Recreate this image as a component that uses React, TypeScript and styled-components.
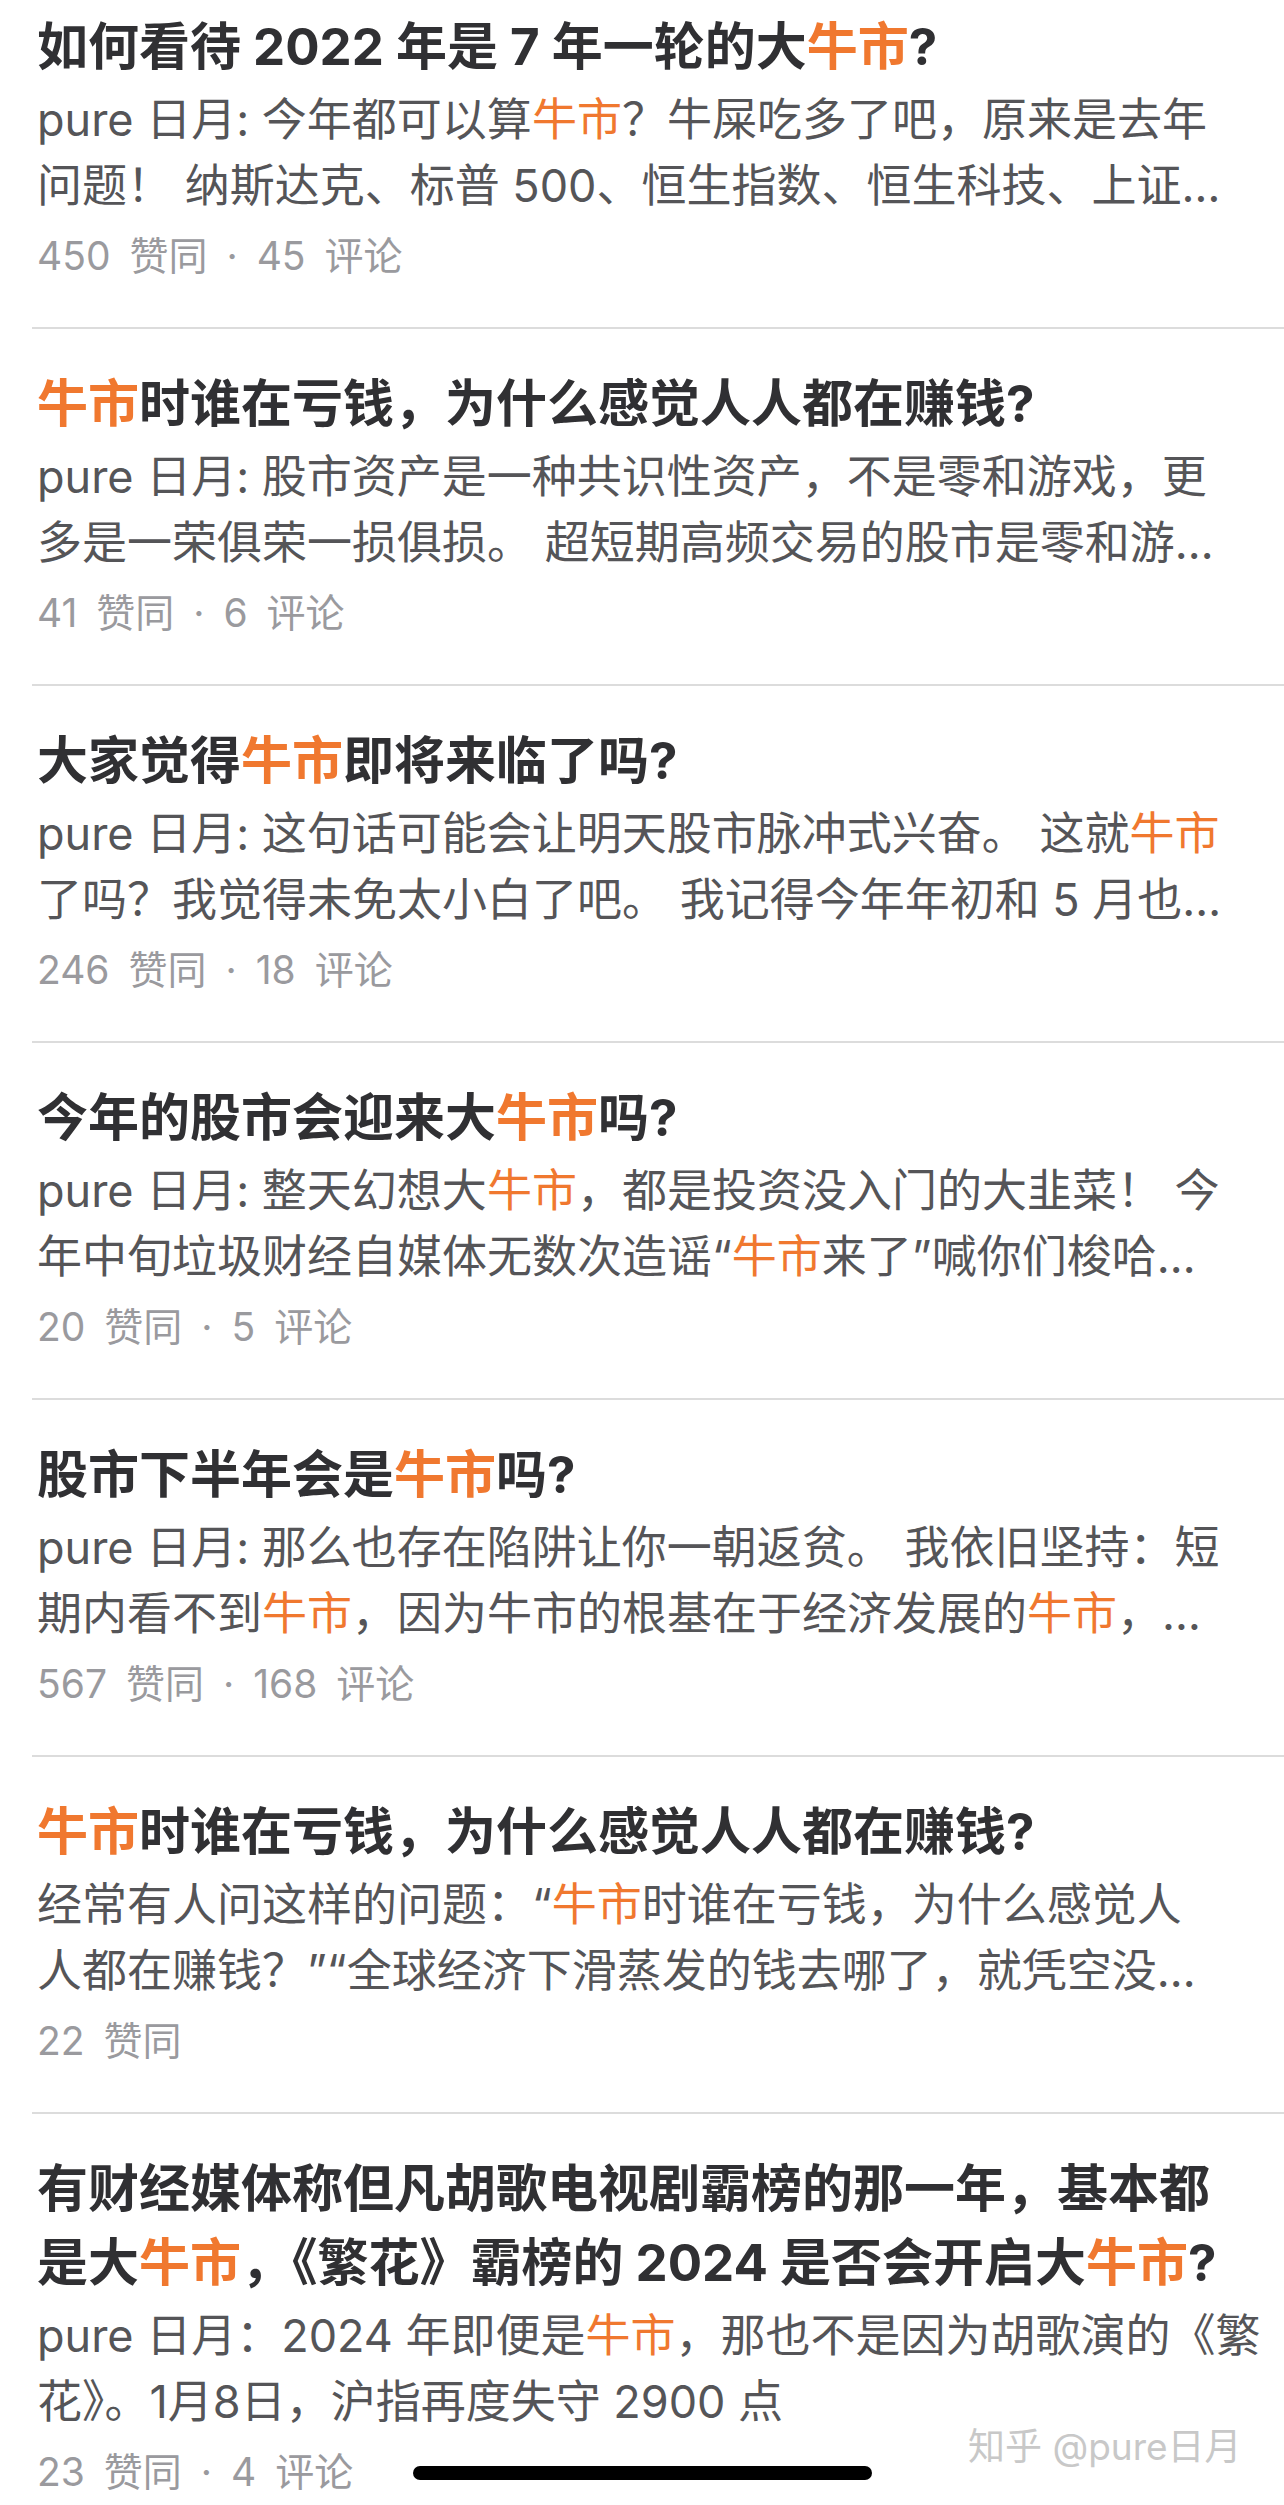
import React from "react";
import styled, { createGlobalStyle } from "styled-components";

type Answer = {
  title: string[];
  excerpt: string[];
  likes: number;
  comments?: number;
};

// {牛市} marks the highlighted keyword
const answers: Answer[] = [
  {
    title: ["如何看待 2022 年是 7 年一轮的大{牛市}?"],
    excerpt: [
      "pure 日月: 今年都可以算{牛市}？牛屎吃多了吧，原来是去年",
      "问题！ 纳斯达克、标普 500、恒生指数、恒生科技、上证…",
    ],
    likes: 450,
    comments: 45,
  },
  {
    title: ["{牛市}时谁在亏钱，为什么感觉人人都在赚钱?"],
    excerpt: [
      "pure 日月: 股市资产是一种共识性资产，不是零和游戏，更",
      "多是一荣俱荣一损俱损。 超短期高频交易的股市是零和游…",
    ],
    likes: 41,
    comments: 6,
  },
  {
    title: ["大家觉得{牛市}即将来临了吗?"],
    excerpt: [
      "pure 日月: 这句话可能会让明天股市脉冲式兴奋。 这就{牛市}",
      "了吗？我觉得未免太小白了吧。 我记得今年年初和 5 月也…",
    ],
    likes: 246,
    comments: 18,
  },
  {
    title: ["今年的股市会迎来大{牛市}吗?"],
    excerpt: [
      "pure 日月: 整天幻想大{牛市}，都是投资没入门的大韭菜！ 今",
      "年中旬垃圾财经自媒体无数次造谣“{牛市}来了”喊你们梭哈…",
    ],
    likes: 20,
    comments: 5,
  },
  {
    title: ["股市下半年会是{牛市}吗?"],
    excerpt: [
      "pure 日月: 那么也存在陷阱让你一朝返贫。 我依旧坚持：短",
      "期内看不到{牛市}，因为牛市的根基在于经济发展的{牛市}，…",
    ],
    likes: 567,
    comments: 168,
  },
  {
    title: ["{牛市}时谁在亏钱，为什么感觉人人都在赚钱?"],
    excerpt: [
      "经常有人问这样的问题：“{牛市}时谁在亏钱，为什么感觉人",
      "人都在赚钱？”“全球经济下滑蒸发的钱去哪了，就凭空没…",
    ],
    likes: 22,
  },
  {
    title: [
      "有财经媒体称但凡胡歌电视剧霸榜的那一年，基本都",
      "是大{牛市}，《繁花》霸榜的 2024 是否会开启大{牛市}?",
    ],
    excerpt: [
      "pure 日月：2024 年即便是{牛市}，那也不是因为胡歌演的《繁",
      "花》。1月8日，沪指再度失守 2900 点",
    ],
    likes: 23,
    comments: 4,
  },
];

function highlight(text: string) {
  return text.split(/(\{[^}]*\})/).map((part, i) =>
    part.startsWith("{") ? <Hl key={i}>{part.slice(1, -1)}</Hl> : part
  );
}

export default function App() {
  return (
    <Screen>
      <GlobalStyle />
      <List>
        {answers.map((a, idx) => (
          <Item key={idx}>
            <Title>
              {a.title.map((t, i) => (
                <Line key={i}>{highlight(t)}</Line>
              ))}
            </Title>
            <Excerpt>
              {a.excerpt.map((t, i) => (
                <Line key={i}>{highlight(t)}</Line>
              ))}
            </Excerpt>
            <Meta>
              {a.likes} 赞同
              {a.comments !== undefined && ` · ${a.comments} 评论`}
            </Meta>
          </Item>
        ))}
      </List>
      <Watermark>知乎 @pure日月</Watermark>
      <HomeIndicator />
    </Screen>
  );
}

const GlobalStyle = createGlobalStyle`
  html, body {
    margin: 0;
    padding: 0;
    background: #fff;
  }
`;

const Screen = styled.div`
  position: relative;
  width: 1284px;
  height: 2505px;
  overflow: hidden;
  background: #fff;
  font-family: Inter, "Noto Sans CJK SC", sans-serif;
`;

const List = styled.div`
  padding-left: 32px;
`;

const Item = styled.article`
  border-top: 2px solid #dcdcdc;
  padding: 38px 0 38px 5px;

  &:first-child {
    border-top: none;
    padding-top: 10px;
  }
`;

const Line = styled.div`
  white-space: nowrap;
`;

const Title = styled.h2`
  margin: 0;
  font-size: 51px;
  line-height: 74px;
  font-weight: 700;
  color: #303033;
`;

const Excerpt = styled.div`
  margin-top: 3px;
  font-size: 45px;
  line-height: 66px;
  color: #555558;
`;

const Meta = styled.div`
  margin-top: 4px;
  font-size: 39px;
  line-height: 66px;
  word-spacing: 8px;
  color: #9a9a9e;
`;

const Hl = styled.span`
  color: #f0782f;
`;

const Watermark = styled.div`
  position: absolute;
  left: 968px;
  top: 2423px;
  font-size: 37px;
  line-height: 48px;
  color: #c8c8c8;
  text-shadow: 0 0 2px #fff;
  white-space: nowrap;
`;

const HomeIndicator = styled.div`
  position: absolute;
  left: 413px;
  top: 2466px;
  width: 459px;
  height: 14px;
  border-radius: 7px;
  background: #000;
`;
